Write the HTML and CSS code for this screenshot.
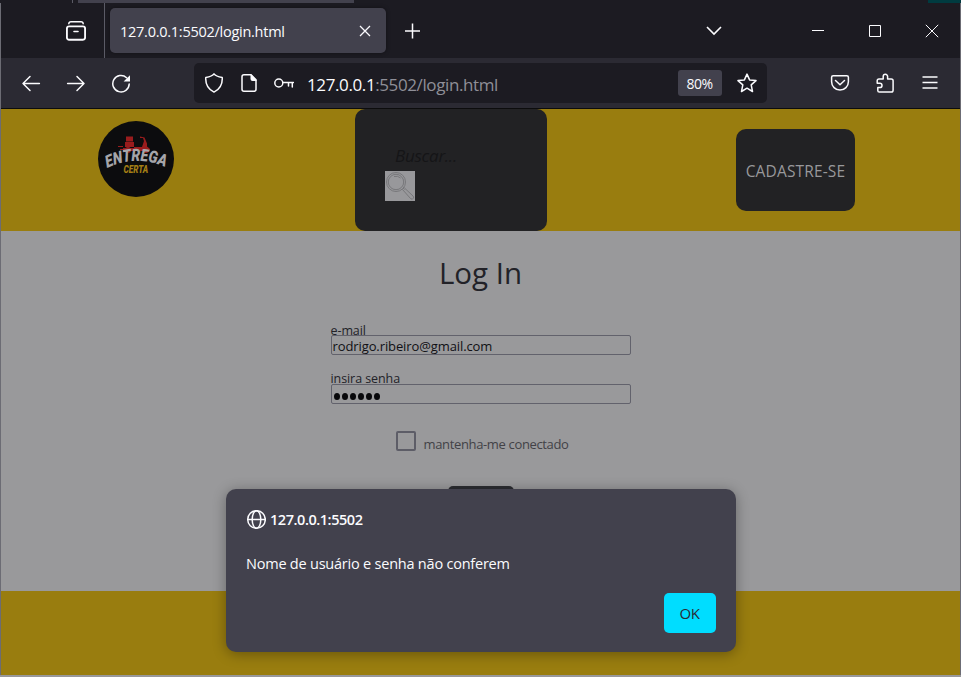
FILE: index.html
```html
<!DOCTYPE html>
<html lang="pt-BR">
<head>
<meta charset="utf-8">
<title>Log In</title>
<link rel="stylesheet" href="styles.css">
</head>
<body>
<div class="backdrop"><span class="backdrop-line"></span><span class="backdrop-tab"></span><span class="backdrop-accent"></span></div>
<div class="window">
  <div class="tabs">
    <div class="tabs-view">
      <svg class="icon" viewBox="0 0 20 20"><path d="M2.800 2.700Q3 .8 5 .8H15Q17 .8 17.200 2.700"/><rect x=".9" y="5.400" width="18.200" height="13.300" rx="2.200" stroke-width="1.900"/><path d="M8 10.500h4" stroke-width="1.600"/></svg>
    </div>
    <div class="tab">
      <span class="tab-title">127.0.0.1:5502/login.html</span>
      <svg class="tab-close" viewBox="0 0 12 12"><path d="M1 1l10 10M11 1L1 11"/></svg>
    </div>
    <svg class="new-tab" viewBox="0 0 16 16"><path d="M8.500 .5v15M1 8h15"/></svg>
    <div class="controls">
      <svg class="chevron" viewBox="0 0 16 10"><path d="M1 1l7 7 7-7"/></svg>
      <svg class="control" viewBox="0 0 12 12"><path d="M0 5.500h12"/></svg>
      <svg class="control" viewBox="0 0 12 12"><path d="M.5.5h11v11H.5z"/></svg>
      <svg class="control close" viewBox="0 0 14 14"><path d="M.8.8l12.400 12.400M13.200.8L.8 13.200"/></svg>
    </div>
  </div>
  <div class="toolbar">
    <div class="nav">
      <svg class="icon" viewBox="0 0 20 20"><path d="M18.400 10.500H2M9 3.500L2 10.500l7 7"/></svg>
      <svg class="icon" viewBox="0 0 20 20"><path d="M1.600 10.500H18M11 3.500l7 7-7 7"/></svg>
      <svg class="icon" viewBox="0 0 20 20"><path d="M15.600 4.700A8.200 8.200 0 1 0 18.200 10.900"/><path class="solid" d="M19 2.300V8.500h-6.400z"/></svg>
    </div>
    <div class="urlbar">
      <svg class="icon" viewBox="0 0 20 20"><path d="M10 .9C8.800 2.600 5 3.900 1.800 4.400Q1 14.800 10 19.100 19 14.800 18.200 4.400C15 3.900 11.200 2.600 10 .9z"/></svg>
      <svg class="icon page" viewBox="0 0 20 20"><path d="M5 1.700h7L17 6.800V16.300q0 2-2 2H5q-2 0-2-2V3.700q0-2 2-2z"/><path class="solid" d="M11.500 1.500h1L17.500 7v1h-4q-2 0-2-2z"/></svg>
      <svg class="icon key" viewBox="0 0 20 20"><circle cx="4.800" cy="10" r="4"/><path d="M9 9.500h10.500M14.500 9.500v3.500M18.300 9.500v4.500"/></svg>
      <span class="url"><b>127.0.0.1</b>:5502/login.html</span>
      <span class="zoom">80%</span>
      <svg class="icon star" viewBox="0 0 20 20"><path d="M10 1.100l2.600 5.800 6.400.7-4.800 4.300 1.300 6.600L10 15.200l-5.500 3.300 1.300-6.600L1 7.600l6.400-.7z"/></svg>
    </div>
    <div class="actions">
      <svg class="icon" viewBox="0 0 20 20"><path d="M3.200 2.700h13.600q1.600 0 1.600 1.600v4.400a8.400 8.400 0 0 1-16.800 0V4.300q0-1.600 1.600-1.600zM5.500 7.500l4.500 4.200 4.500-4.200"/></svg>
      <svg class="icon" viewBox="0 0 20 20"><path d="M4 5.900h4.200V3.500a2.200 2.200 0 0 1 4.400 0v2.400h3.700q1.800 0 1.800 1.800v9.500q0 1.800-1.800 1.800H4.400Q2.800 19 2.800 17.400v-2.800h2a2.200 2.200 0 0 0 0-4.400H2.200V7.700q0-1.800 1.800-1.800z"/></svg>
      <svg class="icon menu" viewBox="0 0 20 20"><path d="M2.500 4h15M2.500 9.500h15M2.500 15h15"/></svg>
    </div>
  </div>
  <div class="page-view">
    <header class="site-header">
      <svg class="logo" viewBox="0 0 76 76">
        <defs><path id="arc" d="M11 47.200Q47 32.500 85 47.200"/></defs>
        <circle cx="38" cy="38" r="38" fill="#0c0c0e"/>
        <g fill="#991c1d"><path d="M28 15.500h7v5h-7zM27 21h9v5h-9zM25 27h11v-1h8l2-6-1-3h-3v-1.500l4.500 1 2.500 6v3l3 2.500v2H25z"/><circle cx="30" cy="29" r="3"/><circle cx="48" cy="29" r="3"/><path d="M20 25h5v1h-5zM22 28h4v1h-4z"/></g>
        <g transform="scale(.82 1)"><text class="logo-name"><textPath href="#arc" textLength="73">ENTREGA</textPath></text></g>
        <text class="logo-sub" transform="translate(25.500 51.800) scale(.78 1)">CERTA</text>
      </svg>
      <div class="search">
        <span class="search-hint">Buscar...</span>
        <svg class="search-icon" viewBox="0 0 30 30"><circle cx="11" cy="11" r="9.500"/><circle cx="11" cy="11" r="7.700"/><path d="M9 5.500q4-1 6.500 1.500M17.500 18.500l8 9q2 1.800 3-.5.500-1-.5-2l-8.500-8M18 17l1.500 1.500M17.500 18.500l2-2"/></svg>
      </div>
      <a class="signup">CADASTRE-SE</a>
    </header>
    <main class="login">
      <h1>Log In</h1>
      <label class="field"><span class="label">e-mail</span><span class="input"><span class="email">rodrigo.ribeiro@gmail.com</span></span></label>
      <label class="field second"><span class="label">insira senha</span><span class="input dots"><i></i><i></i><i></i><i></i><i></i><i></i></span></label>
      <label class="remember"><span class="checkbox"></span><span class="remember-text">mantenha-me conectado</span></label>
      <div class="submit"></div>
    </main>
    <footer class="site-footer"></footer>
    <div class="dialog">
      <div class="dialog-head">
        <svg class="icon" viewBox="0 0 20 20"><circle cx="10.500" cy="9.500" r="8.800"/><ellipse cx="10.500" cy="9.500" rx="4.300" ry="8.800"/><path d="M1.700 9.500h17.600"/></svg>
        <span class="dialog-origin">127.0.0.1:5502</span>
      </div>
      <p class="dialog-text">Nome de usuário e senha não conferem</p>
      <div class="dialog-buttons"><button class="ok">OK</button></div>
    </div>
  </div>
</div>
</body>
</html>
```
FILE: styles.css
```css
* { box-sizing: border-box; }
body { margin: 0; width: 961px; height: 677px; overflow: hidden; background: #98989b; font-family: "Open Sans", "Noto Sans", sans-serif; font-size: 15px; }
svg { display: block; flex: none; fill: none; stroke: #fbfbfe; stroke-width: 1.3; }
.icon { width: 20px; height: 20px; stroke-width: 1.5; stroke-linejoin: round; stroke-linecap: round; }
.solid { fill: #fbfbfe; stroke: none; }
.backdrop { height: 3px; background: #1c1b22; display: flex; }
.backdrop-line { width: 73px; border-right: 1px solid #5b5b66; }
.backdrop-tab { width: 276px; margin-left: 5px; background: #42414d; }
.backdrop-accent { width: 33px; margin-left: auto; background: #003b40; }
.window { height: 672px; border: solid #6c6c74; border-width: 0 1px; }
.tabs { height: 55px; background: #1c1b22; display: flex; align-items: center; }
.tabs-view { width: 104px; height: 55px; border-right: 1px solid #5b5b66; display: flex; align-items: center; justify-content: flex-end; padding-right: 18px; }
.tab { width: 276px; height: 45px; margin-left: 5px; padding: 0 15px 0 10px; border-radius: 5px; background: #42414d; box-shadow: 0 0 4px #0006; display: flex; align-items: center; justify-content: space-between; color: #fbfbfe; }
.tab-title { font-size: 14.500px; letter-spacing: -.26px; padding-top: 1px; }
.tab-close { width: 12px; height: 12px; }
.new-tab { width: 16px; height: 16px; margin-left: 18px; stroke-width: 1.5; }
.controls { margin-left: auto; padding-right: 21px; display: flex; align-items: center; }
.chevron { width: 16px; height: 10px; margin-right: 90px; stroke-width: 1.6; }
.control { width: 12px; height: 12px; margin-right: 45px; stroke-width: 1; }
.control.close { width: 14px; height: 14px; margin: 0; margin-left: -1px; }
.toolbar { height: 51px; background: #2b2a33; border-bottom: 1px solid #0c0c0d; display: flex; align-items: center; padding-left: 20px; }
.nav { display: flex; gap: 25px; }
.urlbar { width: 573px; height: 40px; margin-left: 63px; padding: 0 10px; border-radius: 5px; background: #1c1b22; display: flex; align-items: center; }
.page { margin-left: 15px; }
.key { margin-left: 15px; }
.url { margin-left: 13px; margin-top: 2px; flex: 1; font-size: 17px; letter-spacing: -.39px; color: #8f8f98; white-space: nowrap; }
.url b { font-weight: 400; color: #fbfbfe; }
.zoom { width: 44px; height: 26px; margin-right: 15px; border-radius: 3px; background: #42414d; color: #fbfbfe; font-size: 14px; line-height: 28px; text-align: center; letter-spacing: -.5px; text-indent: -1px; }
.actions { margin-left: 63px; display: flex; gap: 25px; }
.actions .menu { stroke-linecap: butt; }
.page-view { position: relative; height: 566px; background: #99999b; }
.site-header { height: 122px; background: #997d0f; display: flex; align-items: flex-start; }
.logo { width: 76px; height: 76px; margin: 12px 0 0 97px; stroke: none; }
.logo-name { fill: #a5a5aa; font: italic 900 17px Roboto, sans-serif; }
.logo-sub { fill: #a37e15; font: italic 900 10.500px Roboto, sans-serif; }
.search { width: 192px; height: 122px; margin-left: 181px; padding: 33px 0 0 30px; border-radius: 10px; background: #222224; }
.search-hint { display: block; height: 29px; padding-left: 10px; font-size: 17px; line-height: 28px; font-style: italic; letter-spacing: -.25px; color: #151517; }
.search-icon { width: 30px; height: 30px; background: #98989b; stroke: #77777a; stroke-width: 1; }
.signup { width: 119px; height: 82px; margin: 20px 0 0 189px; border-radius: 10px; background: #222224; color: #98989b; font-size: 15.500px; letter-spacing: .15px; line-height: 85px; text-align: center; white-space: nowrap; }
.login { height: 360px; display: flex; flex-direction: column; align-items: center; color: #222228; }
h1 { margin: 21px 0 0; height: 42px; line-height: 42px; font-weight: 400; font-size: 29.500px; letter-spacing: 0; }
.field { width: 300px; margin-top: 29px; display: flex; flex-direction: column; }
.field.second { margin-top: 18px; }
.label { height: 12px; line-height: 16px; font-size: 12.500px; letter-spacing: -.08px; }
.field.second .label { height: 11px; line-height: 12px; }
.input { height: 20px; border: 1px solid #62626c; border-radius: 2px; padding-left: 1px; display: flex; align-items: center; color: #101014; font-size: 13px; letter-spacing: -.1px; }
.email { line-height: 18px; height: 17px; overflow: hidden; }
.dots { gap: 2px; padding: 5px 0 0 2px; }
.dots i { width: 6px; height: 7px; border-radius: 50%; background: #08080b; }
.remember { width: 300px; margin-top: 27px; padding-left: 65px; display: flex; align-items: center; }
.checkbox { width: 20px; height: 20px; border: 2px solid #5d5d67; border-radius: 2px; }
.remember-text { margin: 6px 0 -1px 8px; line-height: 15px; height: 15px; font-size: 13px; letter-spacing: -.35px; color: #424247; white-space: nowrap; }
.submit { width: 66px; height: 36px; margin-top: 35px; border-radius: 5px; background: #2c2d32; }
.site-footer { height: 84px; background: #997d0f; }
.dialog { position: absolute; left: 225px; top: 380px; width: 510px; height: 163px; padding: 20px; border-radius: 10px; background: #42414d; color: #fbfbfe; box-shadow: 0 2px 14px #0005; }
.dialog-head { height: 21px; display: flex; align-items: center; gap: 4px; }
.dialog-origin { font-size: 14.500px; font-weight: 600; letter-spacing: -.45px; }
.dialog-text { margin: 23px 0 0; height: 22px; line-height: 22px; font-size: 14.500px; letter-spacing: -.22px; white-space: nowrap; }
.dialog-buttons { margin-top: 18px; display: flex; justify-content: flex-end; }
.ok { width: 52px; height: 40px; padding: 0 1px 0 0; border: 0; border-radius: 5px; background: #00ddff; color: #2b2a33; font: 500 15px "Open Sans", sans-serif; letter-spacing: -.5px; }
```
